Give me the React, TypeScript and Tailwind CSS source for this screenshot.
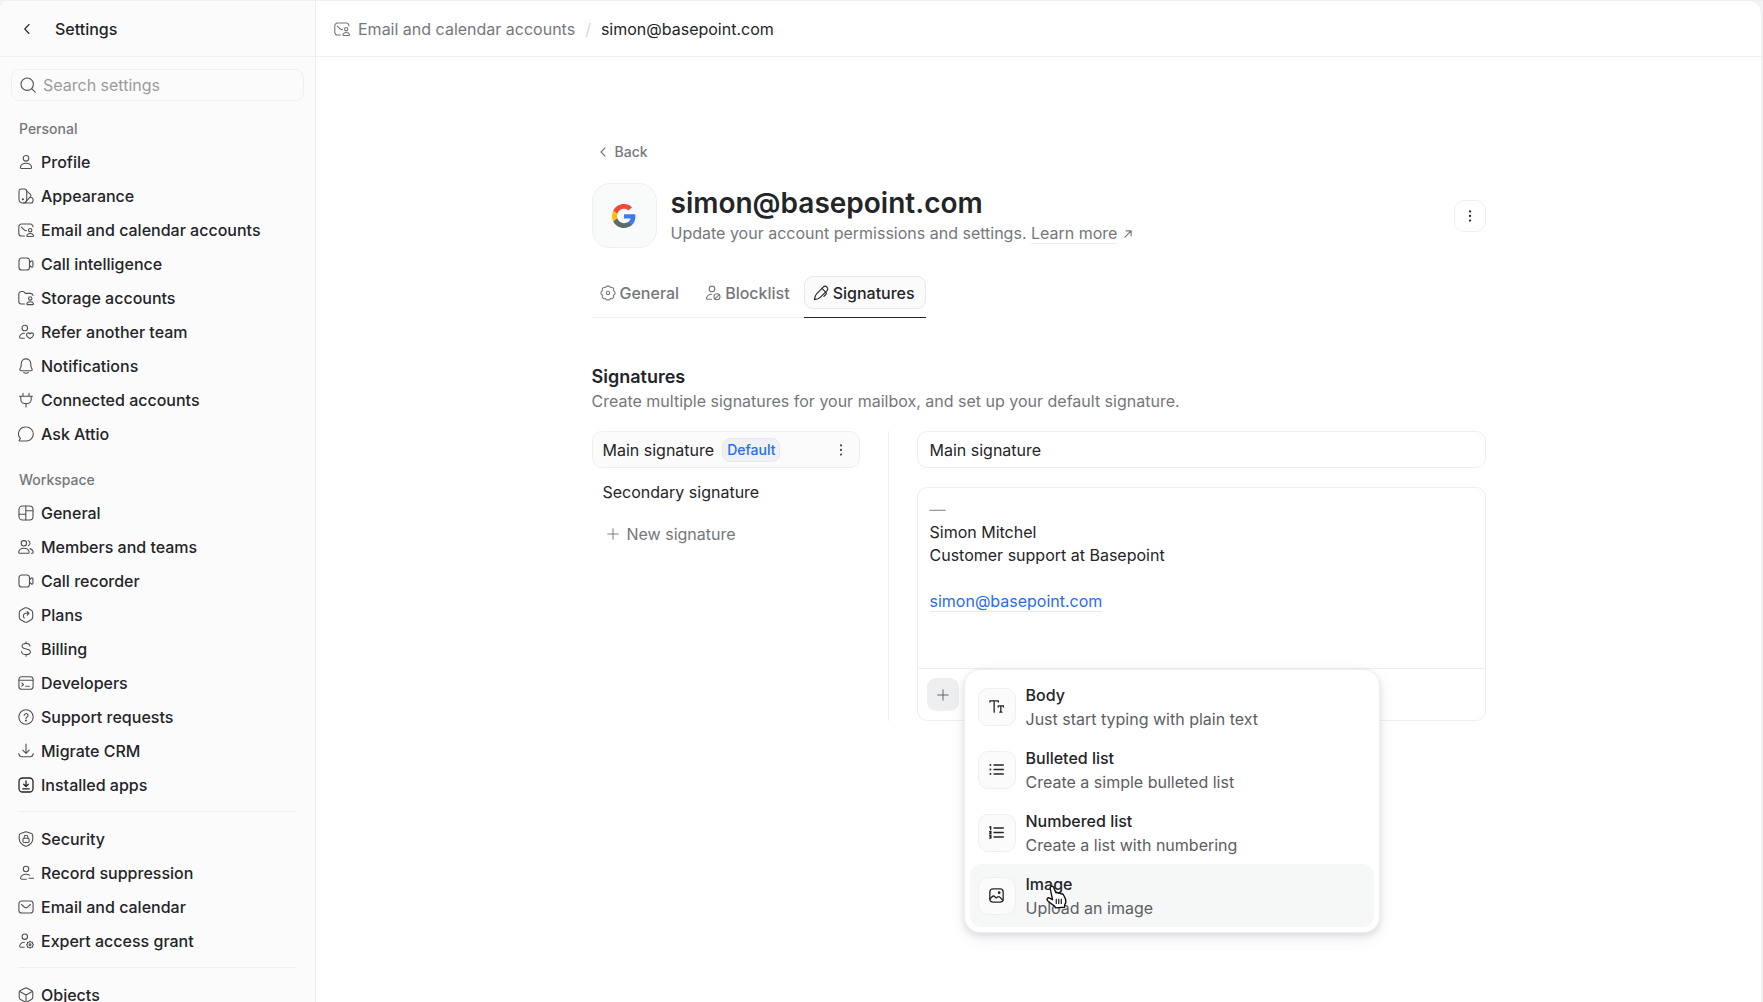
import type { ReactNode } from 'react';

const ICONS: Record<string, ReactNode> = {
  profile: (
    <>
      <circle cx="8" cy="4.3" r="2.8" />
      <path d="M8 9.2c-3.2 0-5 1.6-5.5 3.6-.3 1 .4 1.7 1.3 1.7h8.4c.9 0 1.6-.7 1.3-1.7C13 10.8 11.2 9.2 8 9.2Z" />
    </>
  ),
  appearance: (
    <>
      <path d="M3.2 1h3.3a2.2 2.2 0 0 1 2.2 2.2V12a3.3 3.3 0 0 1-3.3 3h-.9A3.5 3.5 0 0 1 1 11.5V3.2A2.2 2.2 0 0 1 3.2 1Z" />
      <path d="m8.700 3.200 3.600 3a1.800 1.800 0 0 1 .2 2.500l-5.300 5.600" />
      <path d="M11.8 9.500H13a2 2 0 0 1 2 2V13a2 2 0 0 1-2 2H5.500" />
      <circle cx="4.900" cy="11.300" r=".6" fill="currentColor" />
    </>
  ),
  mailUser: (
    <>
      <path d="M6.5 14H3.6A2.8 2.8 0 0 1 .8 11.2V4.8A2.8 2.8 0 0 1 3.6 2h8.6A2.8 2.8 0 0 1 15 4.8" />
      <path d="m3.300 5.200 3.200 3c.5.500 1.200.6 1.900.4" />
      <circle cx="12.2" cy="8.2" r="1.7" />
      <path d="M12.200 11.500c-1.800 0-3 .8-3.300 2.100-.1.500.2.900.7.900h5.200c.5 0 .8-.4.7-.9-.3-1.300-1.500-2.100-3.300-2.100Z" />
    </>
  ),
  video: (
    <>
      <rect x="1" y="2" width="10.5" height="12" rx="2.8" />
      <path d="m11.500 6.500 2-1.500c.6-.4 1.400 0 1.400.7v4.600c0 .7-.8 1.100-1.400.7l-2-1.500" />
    </>
  ),
  folderUser: (
    <>
      <path d="M6.500 14H3.300A2.500 2.500 0 0 1 .8 11.500V4a2.500 2.500 0 0 1 2.500-2.500h1.400c.8 0 1.500.4 2 1l.6.9h5.200A2.500 2.500 0 0 1 15 5.500" />
      <circle cx="12.2" cy="8.4" r="1.7" />
      <path d="M12.200 11.700c-1.800 0-3 .8-3.300 2-.1.500.2.900.7.900h5.200c.5 0 .8-.4.7-.9-.3-1.200-1.500-2-3.300-2Z" />
    </>
  ),
  userHeart: (
    <>
      <circle cx="6.8" cy="4" r="2.8" />
      <path d="M6.300 14.200H2.800c-.9 0-1.500-.7-1.200-1.500.6-2 2.300-3.500 4.900-3.500" />
      <path d="M12 14.600c-2-1.100-3.500-2.300-3.500-3.900 0-1.900 2.500-2.500 3.500-.7 1-1.800 3.500-1.200 3.500.7 0 1.600-1.500 2.800-3.500 3.900Z" />
    </>
  ),
  bell: (
    <>
      <path d="M8 .9a4.700 4.700 0 0 0-4.700 4.400l-.2 2.800c0 .3-.1.700-.3 1l-.9 2.100c-.3.700.1 1.500.9 1.500h10.400c.8 0 1.200-.8.9-1.500l-.9-2.100c-.2-.3-.3-.7-.3-1l-.2-2.800A4.700 4.700 0 0 0 8 .9Z" />
      <path d="M5.700 14.300c1.200 1.200 3.400 1.200 4.600 0" />
    </>
  ),
  plug: <path d="M5 1.200v3M11 1.200v3M1.500 4.200h13M2.800 4.200v3.300a4 4 0 0 0 4 4h2.400a4 4 0 0 0 4-4V4.200M8 11.500V15" />,
  chat: <path d="M8.300 1a7 7 0 1 1 0 14H1.800c-.7 0-.8-.6-.4-1l1-1.300A7 7 0 0 1 8.300 1Z" />,
  layout: (
    <>
      <rect x="1" y="1" width="14" height="14" rx="3.5" />
      <path d="M7.800 1v14M7.800 5.700H15M1 9.200h6.800" />
    </>
  ),
  users: (
    <>
      <circle cx="5.9" cy="4.3" r="2.7" />
      <path d="M5.900 9.200c-2.900 0-4.700 1.500-5.200 3.600-.2.900.3 1.500 1.200 1.500h8c.9 0 1.400-.6 1.200-1.500-.5-2.100-2.300-3.600-5.200-3.600Z" />
      <path d="M10.300 1.800a2.700 2.700 0 0 1 0 5M12 9.600c1.700.5 2.800 1.600 3.200 3.200.2.900-.3 1.500-1.200 1.500h-.6" />
    </>
  ),
  hexArrow: (
    <>
      <path d="M6.600 1.100a2.800 2.800 0 0 1 2.800 0l3.900 2.200a2.800 2.800 0 0 1 1.400 2.400v4.600a2.800 2.800 0 0 1-1.400 2.400l-3.900 2.200a2.800 2.800 0 0 1-2.800 0l-3.900-2.200a2.800 2.800 0 0 1-1.400-2.400V5.700a2.800 2.800 0 0 1 1.400-2.400Z" />
      <path d="M6.300 11a2.700 2.700 0 0 1 1.200-4.700h3.200M9.200 4.500l1.800 1.800-1.800 1.800" />
    </>
  ),
  dollar: (
    <path d="M8 .7v1.700M8 13.600v1.700M12 5.200c-.3-1.700-1.800-2.800-4-2.800-2.300 0-4 1-4 2.700 0 4.200 8.400 1.600 8.400 5.700 0 1.800-1.800 2.800-4.300 2.800-2.600 0-4.400-1.200-4.600-3.100" />
  ),
  terminal: (
    <>
      <rect x=".9" y="1.8" width="14.2" height="12.4" rx="2.8" />
      <path d="M.9 5.300h14.200M3.800 8l1.700 1.600-1.700 1.600M7.800 11.300h3.500" />
    </>
  ),
  help: (
    <>
      <circle cx="8" cy="8" r="7.2" />
      <path d="M6.200 6.500a1.900 1.900 0 1 1 2.900 1.600c-.7.400-1.100.7-1.100 1.400" />
      <circle cx="8" cy="11.5" r=".5" fill="currentColor" />
    </>
  ),
  download: (
    <path d="M8 1v9.200M4.800 7.200 8 10.300l3.200-3.100M.8 10.500l.2.900a2.800 2.800 0 0 0 2.700 2.300h8.600a2.800 2.800 0 0 0 2.700-2.300l.2-.9" />
  ),
  installed: (
    <>
      <rect x="1" y="1" width="14" height="14" rx="3.500" />
      <path d="M8 4v5.500M5.700 7.300 8 9.600l2.300-2.300M4.800 11.800h6.400" />
    </>
  ),
  shield: (
    <>
      <path d="M7 1.100a3 3 0 0 1 2 0l4.300 1.500a2.200 2.200 0 0 1 1.500 2.100v2.900c0 3.500-2.300 5.900-5.600 7.300-.8.400-1.600.4-2.400 0-3.300-1.400-5.600-3.800-5.600-7.300V4.700a2.200 2.200 0 0 1 1.500-2.100Z" />
      <rect x="4.9" y="7.2" width="6.2" height="4.3" rx="1.2" />
      <path d="M6.200 7.200V6a1.800 1.800 0 0 1 3.600 0v1.200" />
    </>
  ),
  userMinus: (
    <>
      <circle cx="8" cy="4" r="2.7" />
      <path d="M8.300 14.200H3.800c-.9 0-1.500-.7-1.200-1.600.6-2 2.600-3.400 5.400-3.400 1.400 0 2.600.3 3.500.9M11 13.200h4.500" />
    </>
  ),
  mail: (
    <>
      <rect x=".9" y="2" width="14.2" height="12" rx="2.8" />
      <path d="m3.500 5.500 3 2.700c.9.700 2.100.7 3 0l3-2.700" />
    </>
  ),
  userGear: (
    <>
      <circle cx="6.8" cy="3.7" r="2.7" />
      <path d="M6.300 14.200H2.900c-.9 0-1.500-.7-1.200-1.500.6-2 2.300-3.400 4.800-3.400" />
      <path d="m12 8.300 1.100.8 1.400.1.100 1.400.8 1.100-.8 1.100-.1 1.400-1.400.1-1.100.8-1.100-.8-1.400-.1-.1-1.400-.8-1.100.8-1.100.1-1.400 1.400-.1Z" />
      <circle cx="12" cy="11.7" r=".9" />
    </>
  ),
  cube: (
    <>
      <path d="M6.800 1.200a2.500 2.500 0 0 1 2.400 0l4.300 2.300a2.500 2.500 0 0 1 1.300 2.200v4.600a2.500 2.500 0 0 1-1.300 2.200l-4.300 2.300a2.500 2.500 0 0 1-2.400 0l-4.300-2.300a2.500 2.500 0 0 1-1.300-2.200V5.700a2.500 2.500 0 0 1 1.300-2.200Z" />
      <path d="M1.700 4.500 8 7.900l6.300-3.400M8 7.900V15" />
    </>
  ),
  search: (
    <>
      <circle cx="7.2" cy="7.2" r="6.2" />
      <path d="m11.700 11.700 3.500 3.500" />
    </>
  ),
  chevronLeft: <path d="M10 3.500 5.800 8l4.200 4.500" />,
  gear: (
    <>
      <path d="M5.670 2.360A2.600 2.600 0 0 1 10.330 2.360A2.600 2.600 0 0 1 13.640 5.670A2.600 2.600 0 0 1 13.640 10.330A2.600 2.600 0 0 1 10.330 13.640A2.600 2.600 0 0 1 5.670 13.640A2.600 2.600 0 0 1 2.360 10.330A2.600 2.600 0 0 1 2.360 5.670A2.600 2.600 0 0 1 5.670 2.360Z" />
      <circle cx="8" cy="8" r="1.7" />
    </>
  ),
  userBlock: (
    <>
      <circle cx="7" cy="3.9" r="2.8" />
      <path d="M6.500 14.300H2.800c-.9 0-1.500-.7-1.200-1.500.6-2 2.500-3.500 5.100-3.500" />
      <circle cx="12" cy="11.7" r="3" />
      <path d="m10 13.800 4.100-4.200" />
    </>
  ),
  pen: (
    <>
      <path d="M1.400 14.600c.2-2.500.6-4.200 2.200-5.800l6.600-6.700a2.600 2.600 0 0 1 3.700 3.700l-6.700 6.600c-1.600 1.600-3.300 2-5.800 2.200Z" />
      <path d="m9 3.400 3.600 3.700c.9.900.9 1.700.2 2.400l-1.900 1.900" />
    </>
  ),
  arrowUpRight: <path d="m3 13 9.800-9.800M5 3h8v8" />,
  plus: <path d="M8 2v12M2 8h12" />,
  dots: (
    <g fill="currentColor" stroke="none">
      <circle cx="8" cy="2.8" r="1.3" />
      <circle cx="8" cy="8" r="1.3" />
      <circle cx="8" cy="13.2" r="1.3" />
    </g>
  ),
  type: (
    <path d="M1 3.200V2h9v1.200M5.500 2v12M9.800 8.500V7.300h5.700v1.200M12.600 7.300V14M11.500 14h2.300" />
  ),
  bullets: (
    <>
      <path d="M5.300 3.200h10M5.300 8h10M5.300 12.800h10" />
      <g fill="currentColor" stroke="none">
        <circle cx="1.5" cy="3.2" r="1" />
        <circle cx="1.5" cy="8" r="1" />
        <circle cx="1.5" cy="12.800" r="1" />
      </g>
    </>
  ),
  numbers: (
    <path d="M5.300 3.200h10M5.300 8h10M5.300 12.800h10M.8 2.300l1-.6v3.300M.7 7.200c.5-.7 1.600-.4 1.500.3 0 .6-1.500 1.500-1.500 1.900h1.700M.7 11.300h1.500l-.9 1.200c1.300 0 1.300 1.800-.6 1.500" />
  ),
  image: (
    <>
      <rect x=".9" y="1" width="14.2" height="14" rx="3.2" />
      <path d="m1 11.800 2.300-2.500c.9-1 2.200-1 3 0l1.400 1.500 1-1c.9-.9 2.100-.9 2.900 0l3.400 3.400" />
      <circle cx="10.8" cy="5" r=".8" fill="currentColor" />
    </>
  ),
};

function Icon({ name, className = 'size-4' }: { name: string; className?: string }) {
  return (
    <svg
      viewBox="0 0 16 16"
      fill="none"
      stroke="currentColor"
      strokeWidth="1.1"
      strokeLinecap="round"
      strokeLinejoin="round"
      className={`shrink-0 ${className}`}
      aria-hidden="true"
    >
      {ICONS[name]}
    </svg>
  );
}

function GoogleLogo() {
  return (
    <svg viewBox="0 0 48 48" className="size-[26px]" aria-hidden="true">
      <path fill="#3b7bf0" d="M45.100 24.500c0-1.600-.1-2.700-.4-3.900H24v8.200h12.100c-.5 2.700-2 5-4.400 6.500v5.400h7.100c4.100-3.800 6.300-9.400 6.300-16.200Z" />
      <path fill="#5f6b66" d="M24 46c5.900 0 10.900-2 14.500-5.300l-7-5.400c-2 1.300-4.500 2.100-7.500 2.100-5.700 0-10.600-3.900-12.300-9.100H4.300V34C7.900 41.100 15.400 46 24 46Z" />
      <path fill="#fbbc15" d="M11.700 28.300a13.500 13.500 0 0 1 0-8.600V14H4.300a22 22 0 0 0 0 20Z" />
      <path fill="#ee4b3b" d="M24 10.700c3.200 0 6.100 1.100 8.400 3.300l6.300-6.300C34.900 4.100 29.900 2 24 2 15.400 2 7.900 6.900 4.300 14l7.400 5.700c1.700-5.200 6.600-9 12.300-9Z" />
    </svg>
  );
}

function HandCursor() {
  return (
    <svg viewBox="0 0 20 22" className="pointer-events-none absolute left-[75px] top-5 h-[25px] w-[23px]" aria-hidden="true">
      <path
        d="M5.300 2.200c.8-.5 1.800-.1 2.200.8l2.100 4.800c.7-.5 1.800-.4 2.300.5.700-.5 1.800-.3 2.200.6.800-.4 1.800-.1 2.100.8l1.600 3.200c.9 2.500.4 4-.5 5.300l-.3 2.300-7.900.5-.7-1.600c-1.800-1-3.800-2.600-6.200-4.700-1.500-1.400.3-3.200 1.800-2.200l2.500 1.300L4.500 4.300c-.4-.9 0-1.700.8-2.100Z"
        fill="#fff"
        stroke="#111"
        strokeWidth="1.2"
        strokeLinejoin="round"
      />
      <path d="M9.800 13v4.500M12 13v4.500M14.200 13v4.500" stroke="#111" />
    </svg>
  );
}

const personal = [
  ['profile', 'Profile'],
  ['appearance', 'Appearance'],
  ['mailUser', 'Email and calendar accounts'],
  ['video', 'Call intelligence'],
  ['folderUser', 'Storage accounts'],
  ['userHeart', 'Refer another team'],
  ['bell', 'Notifications'],
  ['plug', 'Connected accounts'],
  ['chat', 'Ask Attio'],
];

const workspace = [
  ['layout', 'General'],
  ['users', 'Members and teams'],
  ['video', 'Call recorder'],
  ['hexArrow', 'Plans'],
  ['dollar', 'Billing'],
  ['terminal', 'Developers'],
  ['help', 'Support requests'],
  ['download', 'Migrate CRM'],
  ['installed', 'Installed apps'],
];

const access = [
  ['shield', 'Security'],
  ['userMinus', 'Record suppression'],
  ['mail', 'Email and calendar'],
  ['userGear', 'Expert access grant'],
];

const blocks = [
  { icon: 'type', title: 'Body', text: 'Just start typing with plain text' },
  { icon: 'bullets', title: 'Bulleted list', text: 'Create a simple bulleted list' },
  { icon: 'numbers', title: 'Numbered list', text: 'Create a list with numbering' },
  { icon: 'image', title: 'Image', text: 'Upload an image', active: true },
];

function NavList({ items }: { items: string[][] }) {
  return (
    <ul>
      {items.map(([icon, label]) => (
        <li key={label}>
          <a href="#" className="flex h-[34px] items-center gap-[7px] pl-[18px] font-medium">
            <Icon name={icon} className={icon === 'installed' ? 'size-4 stroke-[1.3]' : 'size-4 text-[#505154]'} />
            {label}
          </a>
        </li>
      ))}
    </ul>
  );
}

function Sidebar() {
  return (
    <aside className="flex w-[316px] shrink-0 flex-col rounded-tl-lg border-r border-[#eeeff1] bg-[#fbfbfb]">
      <div className="flex h-14 shrink-0 items-center border-b border-[#eeeff1] pl-[19px] font-medium">
        <button aria-label="Go back" className="mr-5">
          <Icon name="chevronLeft" />
        </button>
        Settings
      </div>
      <label className="mx-[11px] mt-3 flex h-8 shrink-0 items-center gap-[7px] rounded-[9px] border border-[#eeeff1] px-2">
        <Icon name="search" className="size-4 text-[#505154]" />
        <input
          type="search"
          aria-label="Search settings"
          placeholder="Search settings"
          className="min-w-0 flex-1 bg-transparent outline-none placeholder:text-[#9a9b9e]"
        />
      </label>
      <nav>
        <h2 className="mt-[18px] pl-[19px] text-sm font-medium text-[#75777c]">Personal</h2>
        <div className="mt-1.5">
          <NavList items={personal} />
        </div>
        <h2 className="mt-[19px] pl-[19px] text-sm font-medium text-[#75777c]">Workspace</h2>
        <div className="mt-1.5">
          <NavList items={workspace} />
        </div>
        <hr className="mx-[18px] mb-2.5 mt-[9px] border-[#eeeff1]" />
        <NavList items={access} />
        <hr className="mx-[18px] mb-2.5 mt-[9px] border-[#eeeff1]" />
        <NavList items={[['cube', 'Objects']]} />
      </nav>
    </aside>
  );
}

function BlockMenu() {
  return (
    <div
      role="menu"
      className="absolute left-[46px] top-0 z-10 w-[416px] rounded-2xl border border-[#eeeff1] bg-white p-[5px] shadow-[0_3px_6px_rgba(28,40,64,0.12),0_6px_20px_rgba(28,40,64,0.06)]"
    >
      {blocks.map((b) => (
        <button
          key={b.title}
          role="menuitem"
          className={`relative flex h-[63px] w-full items-center gap-2.5 rounded-xl px-2 text-left ${b.active ? 'bg-[#f6f7f7]' : ''}`}
        >
          <span className="flex size-[38px] items-center justify-center rounded-[10px] border border-[#eeeff1] bg-[#fbfbfb]">
            <Icon name={b.icon} className="size-[15px] stroke-[1.4]" />
          </span>
          <span className="leading-6">
            <span className="block font-medium">{b.title}</span>
            <span className="block text-[#5c5e63]">{b.text}</span>
          </span>
          {b.active && <HandCursor />}
        </button>
      ))}
    </div>
  );
}

function Editor() {
  return (
    <div className="min-w-0 flex-1">
      <input
        aria-label="Signature name"
        defaultValue="Main signature"
        className="block h-[37px] w-full rounded-[10px] border border-[#eeeff1] px-3 outline-none"
      />
      <div className="mt-[19px] rounded-[10px] border border-[#eeeff1]">
        <div className="h-[180px] px-3 pt-2.5 leading-[23px]">
          <p className="text-[#9a9b9e]">—</p>
          <p>Simon Mitchel</p>
          <p>Customer support at Basepoint</p>
          <br />
          <a href="#" className="border-b border-[#e3e8f3] text-[#266df0]">simon@basepoint.com</a>
        </div>
        <div className="relative border-t border-[#eeeff1] p-[9px]">
          <button aria-label="Insert block" className="flex h-[33px] w-8 items-center justify-center rounded-[9px] bg-[#eeeff1]">
            <Icon name="plus" className="size-[14px] text-[#5c5e63]" />
          </button>
          <BlockMenu />
        </div>
      </div>
    </div>
  );
}

function Signatures() {
  return (
    <section className="mt-[47px]">
      <h2 className="text-lg font-semibold leading-6">Signatures</h2>
      <p className="leading-6 text-[#75777c]">
        Create multiple signatures for your mailbox, and set up your default signature.
      </p>
      <div className="mt-[18px] flex">
        <div className="flex w-[268px] shrink-0 flex-col gap-[5px]">
          <div className="flex h-[37px] items-center rounded-[10px] border border-[#eeeff1] bg-[#fbfbfb] pl-2.5 pr-[11px]">
            <button>Main signature</button>
            <span className="ml-2 flex h-6 items-center rounded-lg border border-[#e6e9ee] bg-[#eff1f4] px-1 text-sm font-medium text-[#266df0]">
              Default
            </span>
            <button aria-label="Signature options" className="ml-auto text-[#505154]">
              <Icon name="dots" className="size-[14px]" />
            </button>
          </div>
          <button className="h-[37px] px-[11px] text-left">Secondary signature</button>
          <button className="flex h-[37px] items-center gap-[7px] px-3.5 text-[#75777c]">
            <Icon name="plus" className="size-[14px]" />
            New signature
          </button>
        </div>
        <div className="mx-7 w-px bg-[#eeeff1]" />
        <Editor />
      </div>
    </section>
  );
}

export default function App() {
  return (
    <div className="flex h-screen overflow-hidden border-t border-[#eeeff1] bg-[#f3f4f5] pr-px font-['Inter',sans-serif] text-base text-[#232529]">
      <Sidebar />
      <main className="min-w-0 flex-1 rounded-tr-xl border-r border-[#eeeff1] bg-white">
        <header className="flex h-14 items-center border-b border-[#eeeff1] pl-[18px]">
          <a href="#" className="flex items-center gap-2 text-[#75777c]">
            <Icon name="mailUser" />
            Email and calendar accounts
          </a>
          <span className="mx-2.5 text-[#d5d7db]">/</span>
          <span>simon@basepoint.com</span>
        </header>

        <div className="mx-auto mt-[85px] w-full max-w-[894px]">
          <a href="#" className="flex w-fit items-center gap-[5px] pl-1 text-sm font-medium text-[#75777c]">
            <Icon name="chevronLeft" className="size-[14px] stroke-[1.4]" />
            Back
          </a>
          <div className="mt-[21px] flex items-center">
            <div className="flex size-[65px] items-center justify-center rounded-[18px] border border-[#eeeff1] bg-[#f9fafa]">
              <GoogleLogo />
            </div>
            <div className="ml-3.5 pb-0.5">
              <h1 className="text-[28px] font-semibold leading-9">simon@basepoint.com</h1>
              <p className="leading-6 text-[#75777c]">
                Update your account permissions and settings.{' '}
                <a href="#" className="border-b border-[#eeeff1]">Learn more</a>
                <Icon name="arrowUpRight" className="ml-1.5 inline size-2.5 stroke-[1.8]" />
              </p>
            </div>
            <button aria-label="More options" className="ml-auto flex size-8 items-center justify-center rounded-[10px] border border-[#eeeff1]">
              <Icon name="dots" className="size-3.5" />
            </button>
          </div>

          <div className="mt-7 flex w-fit">
            <div className="flex gap-2.5 border-b border-[#eeeff1] pb-2 pr-1.5 font-medium text-[#75777c]">
              <button className="flex h-[33px] items-center gap-1 px-2">
                <Icon name="gear" />
                General
              </button>
              <button className="flex h-[33px] items-center gap-1 px-2">
                <Icon name="userBlock" />
                Blocklist
              </button>
            </div>
            <div className="border-b border-[#232529] pb-2 font-medium">
              <button className="flex h-[33px] items-center gap-1 rounded-[9px] border border-[#e6e7ea] bg-[#fbfbfb] pl-2 pr-2.5">
                <Icon name="pen" />
                Signatures
              </button>
            </div>
          </div>

          <Signatures />
        </div>
      </main>
    </div>
  );
}
